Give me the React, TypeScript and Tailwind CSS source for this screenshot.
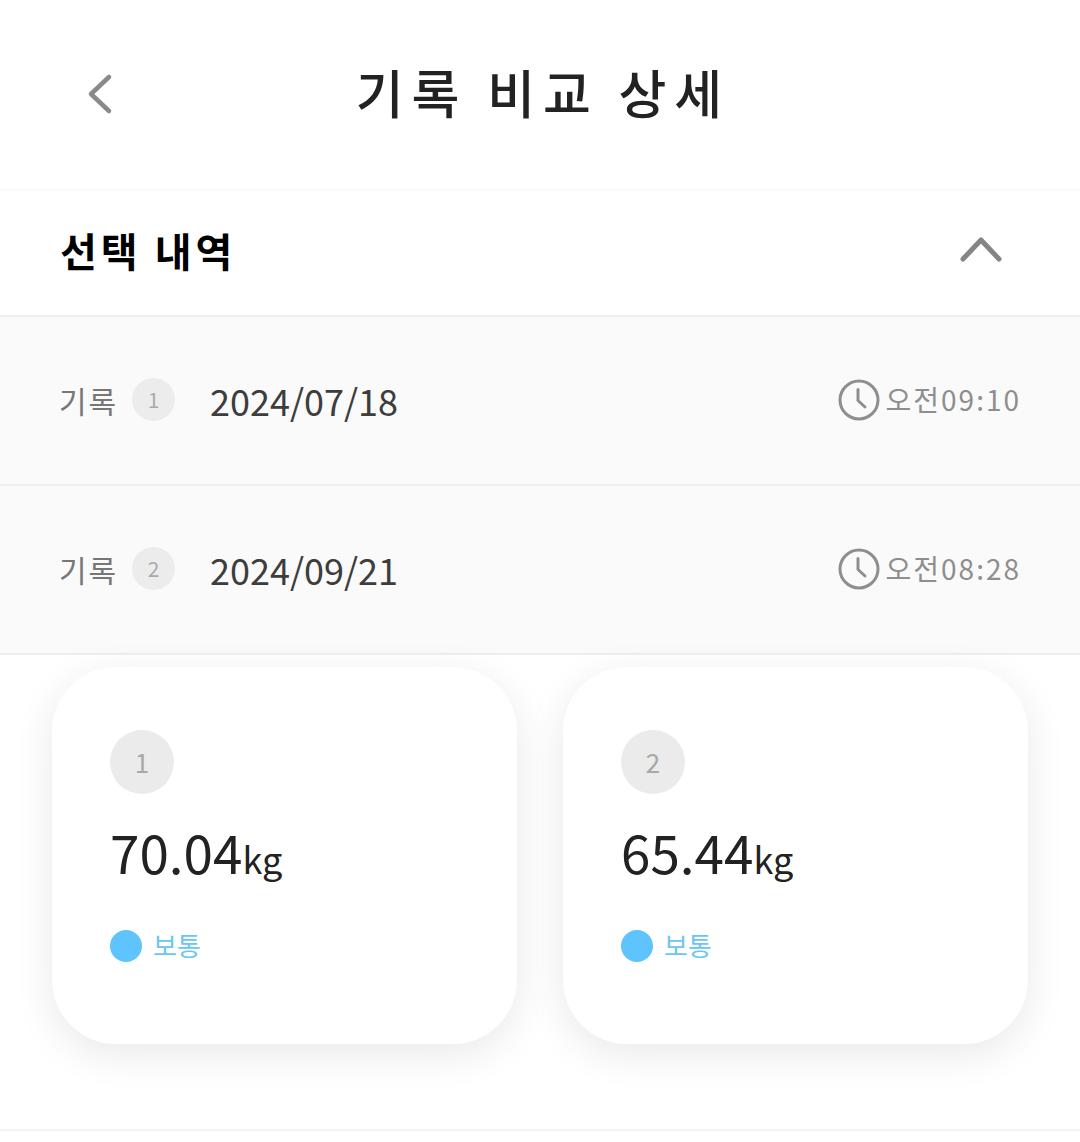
import React from "react";

const font = { fontFamily: '"Noto Sans CJK KR", "Noto Sans", sans-serif' };

function Clock() {
  return (
    <svg width="42" height="42" viewBox="0 0 42 42" fill="none" stroke="#8e8e8e" strokeWidth="3" strokeLinecap="round" strokeLinejoin="round" className="shrink-0 -mt-[2px]">
      <circle cx="21" cy="21" r="19" />
      <path d="M20 10.5V21.5L27 28" />
    </svg>
  );
}

function Row({ n, date, time }: { n: string; date: string; time: string }) {
  return (
    <div className="h-[169px] bg-[#fafafa] border-b-2 border-[#eeeeee] flex items-center pl-[59px] pr-[59px]">
      <span className="text-[30px] leading-none text-[#777777] tracking-[2px] w-[73px] -mt-[2px]">기록</span>
      <span className="w-[43px] h-[43px] rounded-full bg-[#ececec] flex items-center justify-center text-[21px] leading-none text-[#aaaaaa] -mt-[2px]">{n}</span>
      <span className="ml-[35px] text-[36px] leading-none text-[#3d3d3d] -mt-[2px]">{date}</span>
      <div className="ml-auto flex items-center gap-[6px]">
        <Clock />
        <span className="text-[28px] leading-none text-[#8e8e8e] tracking-[2px] whitespace-nowrap -mt-[3px]">{time}</span>
      </div>
    </div>
  );
}

function Card({ n, value }: { n: string; value: string }) {
  return (
    <div className="w-[465px] h-[377px] bg-white rounded-[64px] shadow-[0_10px_40px_rgba(0,0,0,0.09)] pl-[58px] pt-[63px]">
      <div className="w-[64px] h-[64px] rounded-full bg-[#ebebeb] flex items-center justify-center text-[26px] leading-none text-[#a8a8a8]">{n}</div>
      <div className="mt-[25px] h-[64px] flex items-baseline text-[#222222]">
        <span className="text-[53px] leading-[64px]">{value}</span>
        <span className="text-[36px] leading-none">kg</span>
      </div>
      <div className="mt-[47px] flex items-center gap-[11px]">
        <span className="w-[32px] h-[32px] rounded-full bg-[#5fc3fd]" />
        <span className="text-[26px] leading-none text-[#6cc6f2] -mt-[3px]">보통</span>
      </div>
    </div>
  );
}

export default function App() {
  return (
    <div className="w-[1080px] h-[1142px] bg-white overflow-hidden flex flex-col" style={font}>
      <header className="h-[191px] shrink-0 relative flex items-center justify-center border-b-2 border-[#fafafa]">
        <svg width="28" height="44" viewBox="0 0 28 44" fill="none" stroke="#8a8a8a" strokeWidth="4.5" strokeLinecap="round" strokeLinejoin="round" className="absolute left-[86px] top-[72px]">
          <path d="M23 5L5 22L23 39" />
        </svg>
        <h1 className="text-[52px] leading-none font-medium text-[#222222] tracking-[8px] -mt-[6px] ml-[6px]">기록 비교 상세</h1>
      </header>
      <div className="h-[126px] shrink-0 flex items-center justify-between pl-[60px] pr-[78px] border-b-2 border-[#eeeeee]">
        <h2 className="text-[40px] leading-none font-bold text-black tracking-[4px] -mt-[7px]">선택 내역</h2>
        <svg width="42" height="26" viewBox="0 0 42 26" fill="none" stroke="#858585" strokeWidth="5" strokeLinecap="round" strokeLinejoin="round" className="-mt-[8px]">
          <path d="M3 23L21 4L39 23" />
        </svg>
      </div>
      <Row n="1" date="2024/07/18" time="오전09:10" />
      <Row n="2" date="2024/09/21" time="오전08:28" />
      <div className="flex gap-[46px] pl-[52px] pt-[12px] h-[476px] border-b-2 border-[#f4f4f4] shrink-0">
        <Card n="1" value="70.04" />
        <Card n="2" value="65.44" />
      </div>
    </div>
  );
}
